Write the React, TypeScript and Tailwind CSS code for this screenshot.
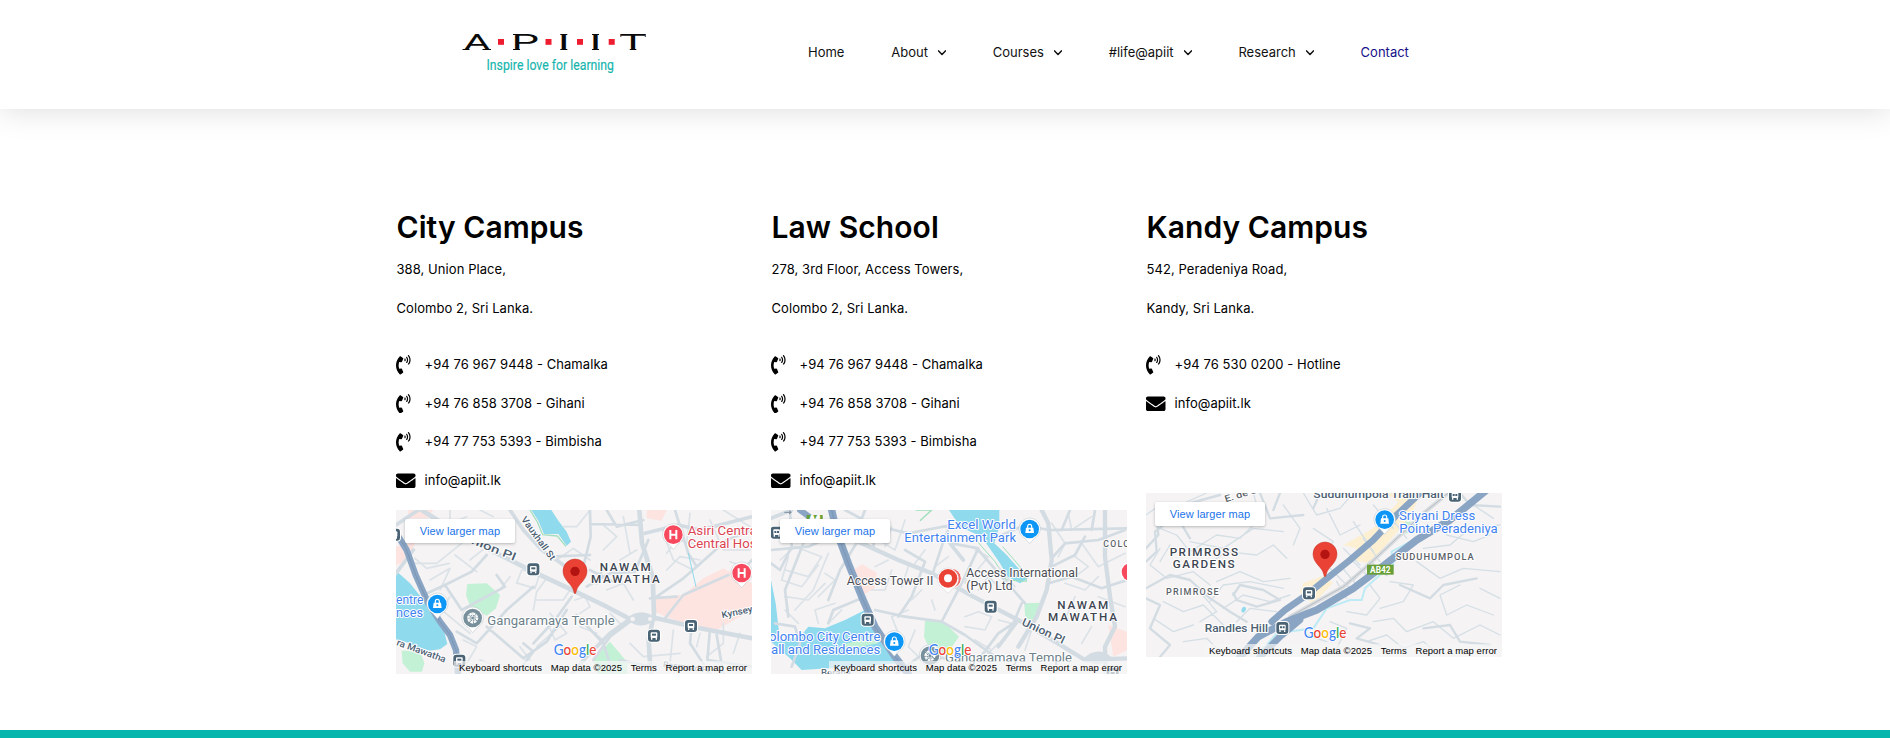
import type { ReactNode } from "react";
import { FaEnvelope, FaPhoneVolume } from "react-icons/fa";

const NAV = [
  { label: "Home", menu: false },
  { label: "About", menu: true },
  { label: "Courses", menu: true },
  { label: "#life@apiit", menu: true },
  { label: "Research", menu: true },
];

function Logo() {
  const letters: [string, number, number][] = [
    ["A", 1.5, 27],
    ["P", 49.4, 27.5],
    ["I", 95.8, 12],
    ["I", 127.5, 12],
    ["T", 157.8, 26.5],
  ];
  const serifs: [number, number, number][] = [
    [0.5, 19, 7],
    [20.5, 19, 8.5],
    [51, 19, 7],
    [51, 4, 4],
    [98.3, 4, 7],
    [98.3, 19, 7],
    [130, 4, 7],
    [130, 19, 7],
    [167.8, 19, 6.5],
  ];
  return (
    <svg width="184" height="44" viewBox="0 0 184 44" className="block overflow-visible">
      {letters.map(([c, x, w], i) => (
        <text
          key={i}
          x={x}
          y="20"
          textLength={w}
          lengthAdjust="spacingAndGlyphs"
          fontFamily="Roboto"
          fontSize="22.4"
          fill="#0a0a0a"
        >
          {c}
        </text>
      ))}
      {serifs.map(([x, y, w], i) => (
        <rect key={i} x={x} y={y} width={w} height="1" fill="#0a0a0a" />
      ))}
      <path d="M158.8 4V7M183.3 4V7" stroke="#0a0a0a" strokeWidth="0.8" />
      {[36, 83.5, 115, 146.7].map((x) => (
        <rect key={x} x={x} y="9" width="6" height="5.8" fill="#ed1c2e" />
      ))}
      <text
        x="24.5"
        y="40.3"
        textLength="127.5"
        lengthAdjust="spacingAndGlyphs"
        fontFamily="Roboto"
        fontSize="14"
        fill="#16b5ad"
        stroke="#16b5ad"
        strokeWidth="0.15"
      >
        Inspire love for learning
      </text>
    </svg>
  );
}

function Road({ d, w = 9, c = "#d3dce3" }: { d: string; w?: number; c?: string }) {
  return <path d={d} fill="none" stroke={c} strokeWidth={w} strokeLinejoin="round" strokeLinecap="round" />;
}

function Label({
  x,
  y,
  len,
  children,
  color = "#4b5563",
  size = 36,
  rotate = 0,
  weight = 500,
  gap,
}: {
  x: number;
  y: number;
  len: number;
  children: string;
  color?: string;
  size?: number;
  rotate?: number;
  weight?: number;
  gap?: boolean;
}) {
  return (
    <text
      x={x}
      y={y}
      textLength={len}
      lengthAdjust={gap ? "spacing" : "spacingAndGlyphs"}
      transform={rotate ? `rotate(${rotate} ${x} ${y})` : undefined}
      fontFamily="Roboto"
      fontSize={size}
      fontWeight={weight}
      fill={color}
      stroke="#ffffff"
      strokeWidth="6"
      strokeLinejoin="round"
      paintOrder="stroke"
    >
      {children}
    </text>
  );
}

function Station({ x, y, train }: { x: number; y: number; train?: boolean }) {
  return (
    <g transform={`translate(${x} ${y})`}>
      <rect x="-21" y="-21" width="42" height="42" rx="12" fill="#fff" />
      <rect x="-18" y="-18" width="36" height="36" rx="9" fill="#4a6375" />
      <rect x="-10" y="-10" width="20" height="17" rx="3" fill="#fff" />
      <path d="M-7 7v5M7 7v5" stroke="#fff" strokeWidth="4" />
      <path d={train ? "M-7 -5H-1V1H-7ZM1 -5H7V1H1Z" : "M-6 -6H6V0H-6Z"} fill="#4a6375" />
    </g>
  );
}

function Poi({ x, y, color, kind }: { x: number; y: number; color: string; kind: "bag" | "hospital" | "temple" }) {
  return (
    <g transform={`translate(${x} ${y})`}>
      <path d="M0 44L-14 28A32 32 0 1 1 14 28Z" fill="#fff" stroke="#b8c0c8" strokeWidth="1.5" />
      <circle r="28" fill={color} />
      {kind === "hospital" && <path d="M-9 -14V14M9 -14V14M-9 0H9" stroke="#fff" strokeWidth="6" />}
      {kind === "bag" && (
        <>
          <path d="M-11 -4H11L13 12H-13Z" fill="#fff" />
          <path d="M-6 -3V-8A6 6 0 0 1 6 -8V-3" fill="none" stroke="#fff" strokeWidth="3.5" />
          <circle cy="4" r="3" fill={color} />
        </>
      )}
      {kind === "temple" && (
        <>
          <circle r="13" fill="none" stroke="#fff" strokeWidth="7" strokeDasharray="6 4.2" />
          <path d="M-17 0H17M0 -17V17M-12 -12L12 12M-12 12L12 -12" stroke="#fff" strokeWidth="3" />
          <circle r="4" fill={color} />
        </>
      )}
    </g>
  );
}

function Pin({ x, y }: { x: number; y: number }) {
  return (
    <g transform={`translate(${x} ${y})`}>
      <path
        d="M0 0C-2 0 -3 -3 -4 -8C-8 -29 -36 -40 -36 -68A36 36 0 1 1 36 -68C36 -40 8 -29 4 -8C3 -3 2 0 0 0Z"
        fill="#ea4335"
        stroke="#c5372c"
        strokeWidth="1.5"
      />
      <circle cy="-67" r="14" fill="#b31412" />
    </g>
  );
}

function GoogleMark({ y }: { y: number }) {
  return (
    <text
      x="491"
      y={y}
      textLength="128"
      lengthAdjust="spacingAndGlyphs"
      fontFamily="Lato"
      fontSize="43"
      fontWeight="500"
      stroke="#fff"
      strokeWidth="5"
      paintOrder="stroke"
    >
      <tspan fill="#4285f4">G</tspan>
      <tspan fill="#ea4335">o</tspan>
      <tspan fill="#fbbc04">o</tspan>
      <tspan fill="#4285f4">g</tspan>
      <tspan fill="#34a853">l</tspan>
      <tspan fill="#ea4335">e</tspan>
    </text>
  );
}

function CityMap() {
  return (
    <>
      <path d="M18 212L60 250L100 300L160 385L172 432L150 448L95 455L60 430L18 418Z" fill="#90daee" />
      <path d="M424 30H484L505 62L530 95L543 125L530 137L505 102H462L445 62Z" fill="#90daee" />
      <path d="M420 30L442 66L458 104L502 108L528 139" fill="none" stroke="#a4dfc0" strokeWidth="4" />
      <path d="M232 252L290 250L330 285L318 325L290 347L240 318L228 285Z" fill="#c3f1d5" />
      <path d="M35 452L90 452L103 490L96 515H60L38 490Z" fill="#c3f1d5" />
      <path d="M608 480L660 425L712 487V522H625Z" fill="#c3f1d5" />
      <path d="M18 140L75 125L60 180L18 195Z" fill="#fde4e1" />
      <path d="M55 30H130L112 55H55Z" fill="#fde4e1" />
      <path d="M800 290L880 285L940 235L1000 205L1086 250V330L980 390L905 375L830 352L795 335Z" fill="#fde4e1" />
      <path d="M770 30H830L815 62L770 55Z" fill="#fde4e1" />
      <Road
        w={5}
        c="#dbe2e8"
        d="M60 190H140L215 130M75 175L110 205L178 190M120 240L180 205L150 270M195 165L260 215M240 180L290 140M380 250L395 210L450 220L435 265L385 250M470 235L440 275L430 330M330 270L360 230M440 300H520L540 270M520 370L440 440M480 340L530 400L495 420L480 385M555 300L585 290L600 320L570 340M600 180L550 145L500 180M640 75L680 110L640 150M700 50L720 160M690 180L740 150M650 270L700 250L730 300M820 100L850 180L910 210M830 210L870 170L930 180M960 60L1000 150L1080 150M900 40L890 130M1000 30L1080 80M600 30L560 80H520M230 490L260 440L220 420M270 480L330 500M390 440L420 480M570 380L620 400M700 380L660 340M850 390L840 490M930 400L920 440M950 470L1000 430V370M1050 400L1030 460M720 430L760 470L870 460M640 420L600 390M180 290L155 330L240 400M270 30L310 50M180 30V70L230 50M830 160L860 120L910 130M1020 185L1080 205"
      />
      <Road
        w={8}
        d="M100 285L165 255L245 215L290 165M165 255L215 330L345 260L320 225M200 395L260 430L350 330L430 260M290 380L400 475L470 425L530 330M380 520L430 455L400 430M545 290L495 360L430 430M600 30L602 110L575 220M650 30L680 80L760 60M600 72L755 75M480 170L600 165M590 260L660 220L735 215L775 120M800 290L880 235L920 200L895 160L855 30M920 200L1010 120L1086 90M780 295L860 290M825 355L880 285L1015 225M560 345L640 430L670 522M740 350L660 410L610 480M905 375L900 430L960 522M960 387L952 480L1086 500M620 250L640 200M670 245L600 210M1040 230L1086 180M690 480L780 500M980 405L1000 522"
      />
      <Road w={14} d="M95 30L150 65L225 110L330 165L440 220L530 262L640 315L720 357L800 355L930 385L1086 415" />
      <Road w={14} d="M748 30L756 130L788 230L792 340L776 420L782 522" />
      <Road w={11} d="M360 30L400 90L455 150L535 205M765 100L865 75L930 90L1086 50M720 357L660 400L590 470L545 522M18 75L85 30M18 220L70 150" />
      <path d="M708 356Q755 318 798 355Q755 398 708 356Z" fill="#d3dce3" />
      <circle cx="728" cy="357" r="7" fill="#f5f3f3" />
      <circle cx="780" cy="357" r="6" fill="#f5f3f3" />
      <Road w={3} c="#90daee" d="M895 160L918 260" />
      <Road w={19} c="#8aa5c4" d="M18 98L50 150L77 225L115 310L150 365L180 405L198 450L204 522" />
      <Road w={2} c="#728eae" d="M18 98L50 150L77 225L115 310L150 365L180 405L198 450L204 522" />
      <Station x={12} y={104} />
      <Label x={215} y={119} len={170} rotate={22} color="#4d6073" size={33}>
        Union Pl
      </Label>
      <Label x={392} y={58} len={155} rotate={54} color="#4d6073" size={28}>
        Vauxhall St
      </Label>
      <Label x={18} y={435} len={155} rotate={20} color="#4d6073" size={28}>
        ra Mawatha
      </Label>
      <Label x={997} y={355} len={94} rotate={-12} color="#4d6073" size={28}>
        Kynsey
      </Label>
      <Label x={629} y={214} len={153} color="#3c4450" size={35} gap>
        NAWAM
      </Label>
      <Label x={603} y={250} len={206} color="#3c4450" size={35} gap>
        MAWATHA
      </Label>
      <Label x={893} y={105} len={207} color="#db4453" size={38} weight={400}>
        Asiri Centra
      </Label>
      <Label x={893} y={143} len={207} color="#db4453" size={38} weight={400}>
        Central Hos
      </Label>
      <Label x={18} y={312} len={82} color="#3f82f0" size={38} weight={400}>
        entre
      </Label>
      <Label x={18} y={350} len={81} color="#3f82f0" size={38} weight={400}>
        nces
      </Label>
      <Label x={292} y={374} len={382} color="#6d7f8b" size={38} weight={400}>
        Gangaramaya Temple
      </Label>
      <Label x={818} y={501} len={140} color="#647789" size={25} rotate={7}>
        Rosmead Pl
      </Label>
      <Station x={430} y={208} />
      <Station x={903} y={378} />
      <Station x={792} y={407} />
      <Station x={208} y={482} />
      <Poi x={142} y={312} color="#0d96f6" kind="bag" />
      <Poi x={248} y={354} color="#78909c" kind="temple" />
      <Poi x={850} y={104} color="#f8485e" kind="hospital" />
      <Poi x={1055} y={219} color="#f8485e" kind="hospital" />
      <Pin x={555} y={281} />
      <GoogleMark y={464} />
    </>
  );
}

function LawMap() {
  return (
    <>
      <path d="M552 30H703V80L688 130L725 165L788 236L765 250L728 230L705 190L650 110L585 80Z" fill="#90daee" />
      <path d="M18 240L32 310L42 395L18 415Z" fill="#90daee" />
      <path d="M300 330L240 360L180 385L130 380L105 410L18 425L75 475L110 510L260 500L400 490L350 430Z" fill="#90daee" />
      <path d="M452 30L500 30L465 62" fill="none" stroke="#9ddfbb" strokeWidth="4" />
      <path d="M620 105L690 185L725 240L785 244L765 200L713 140" fill="none" stroke="#9ddfbb" strokeWidth="3" />
      <path d="M480 362L535 365L582 410L550 455L500 460L477 410Z" fill="#c3f1d5" />
      <path d="M778 310L835 308L820 350L795 366L780 345Z" fill="#c3f1d5" />
      <path d="M225 435L330 410L340 430L260 445Z" fill="#c3f1d5" />
      <path d="M265 210L292 193L335 218L330 265L285 290Z" fill="#fde4e1" />
      <path d="M1030 375L1086 395V450L1045 470Z" fill="#fde4e1" />
      <Road
        w={5}
        c="#dbe2e8"
        d="M45 180L90 140L170 170L130 230L60 210M70 170L50 240L110 260L160 195M190 160L145 270L90 330M180 220L210 240L160 290M60 290L130 300L180 250M100 370L60 330M160 370L150 330L210 310M230 330L190 370M280 70L240 95M330 60L310 100L370 130M380 80L360 140M420 60L390 150L340 120M330 200L370 180M380 210L360 270H320M430 200L410 260M480 150L450 190M550 170L510 200M620 190L600 250M630 150L670 170L620 230M700 260L670 230L640 270M700 200L750 260M600 350L640 335L680 350L660 390L600 380M700 360L740 370L720 420M630 420L680 450M800 390L780 450M860 70L900 130L880 170M910 40L920 90L980 50M930 170L970 200L930 230M950 130L1000 200L1080 160M900 250L960 270L1000 230M1000 290L1080 320M930 290L900 360M430 330L380 350L400 400M450 390L430 440L460 470M440 300L470 270M510 330L500 300M700 430L650 480M980 380L950 430"
      />
      <Road
        w={8}
        d="M18 190L45 210L80 140L75 30M115 130L60 270L70 350M18 150L130 140L220 100M190 300L225 210L280 120M270 110L300 30M330 75L325 145M240 30L325 75L430 100L560 75M555 75L535 125L500 230M420 150L480 185L440 290L400 350M330 330L420 350L530 365L600 405L690 470M530 365L590 250L640 145L560 130M640 150L780 310M770 310L745 370L700 400L640 480M700 110L780 75L850 90L1086 85M860 175L900 130L1000 120L1080 90M915 30L890 90M990 30L980 90M860 200L930 165L960 110M850 250L920 230L1010 265L1086 240M80 500L105 430L90 380L30 370M190 370L205 330L300 290M395 520L470 465L540 475"
      />
      <Road w={13} d="M195 85L280 125L400 180L500 220L625 290L760 360L870 425L960 480L1086 475" />
      <Road w={13} d="M830 30L850 70L860 180L845 270L815 350L760 440M1020 30V170L1035 290L1050 380L1020 440L1022 522" />
      <path d="M955 475Q1000 435 1040 472Q1000 512 955 475Z" fill="#d3dce3" />
      <Road w={11} d="M18 92L140 75L195 85M555 130L595 180M18 55L80 30M760 360L700 440" />
      <Road w={22} c="#8aa5c4" d="M200 30L215 95L250 190L290 290L330 380L390 470L430 522" />
      <Road w={2} c="#728eae" d="M200 30L215 95L250 190L290 290L330 380L390 470L430 522" />
      <Road w={18} c="#8aa5c4" d="M105 30L160 70" />
      <rect x="125" y="45" width="48" height="30" fill="#689f38" />
      <Label x={133} y={70} len={32} color="#fff" size={26}>
        A4
      </Label>
      <path d="M58 37H78M72 32L79 37L72 42" stroke="#7b8a98" strokeWidth="3" fill="none" />
      <Station x={35} y={98} train />
      <Label x={547} y={87} len={206} color="#3f82f0" size={38} weight={400}>
        Excel World
      </Label>
      <Label x={418} y={126} len={335} color="#3f82f0" size={38} weight={400}>
        Entertainment Park
      </Label>
      <Label x={245} y={254} len={260} color="#4b4d55" size={38} weight={400}>
        Access Tower II
      </Label>
      <Label x={604} y={232} len={335} color="#4b4d55" size={38} weight={400}>
        Access International
      </Label>
      <Label x={604} y={271} len={139} color="#4b4d55" size={38} weight={400}>
        (Pvt) Ltd
      </Label>
      <Label x={877} y={327} len={153} color="#3c4450" size={35} gap>
        NAWAM
      </Label>
      <Label x={849} y={363} len={207} color="#3c4450" size={35} gap>
        MAWATHA
      </Label>
      <Label x={1015} y={140} len={78} color="#5b6168" size={26} gap>
        COLO
      </Label>
      <Label x={768} y={374} len={138} rotate={25} color="#4d6073" size={33}>
        Union Pl
      </Label>
      <Label x={12} y={424} len={334} color="#3f82f0" size={38} weight={400}>
        olombo City Centre
      </Label>
      <Label x={18} y={463} len={328} color="#3f82f0" size={38} weight={400}>
        all and Residences
      </Label>
      <Label x={168} y={528} len={90} color="#5b6e80" size={28}>
        Beraha
      </Label>
      <Label x={540} y={485} len={381} color="#6d7f8b" size={38} weight={400}>
        Gangaramaya Temple
      </Label>
      <Station x={308} y={359} />
      <Station x={677} y={320} />
      <Station x={1043} y={522} />
      <Poi x={794} y={87} color="#0d96f6" kind="bag" />
      <Poi x={388} y={425} color="#0d96f6" kind="bag" />
      <Poi x={495} y={467} color="#78909c" kind="temple" />
      <circle cx="1096" cy="216" r="30" fill="#fff" />
      <circle cx="1096" cy="216" r="26" fill="#f8485e" />
      <circle cx="559" cy="235" r="30" fill="#f26965" stroke="#fff" strokeWidth="3" />
      <path d="M549 280L533 264A32 32 0 1 1 565 264Z" fill="#fff" stroke="#b8c0c8" strokeWidth="1" />
      <circle cx="549" cy="235" r="28" fill="#ea4335" />
      <circle cx="549" cy="235" r="12" fill="#fff" />
      <GoogleMark y={464} />
    </>
  );
}

function KandyMap() {
  return (
    <>
      <path d="M735 24H840L815 90L690 235L635 225L650 190L610 180L700 130L775 50Z" fill="#fcefd2" />
      <path d="M490 295L555 270L578 295L540 335L515 355L480 320Z" fill="#fcefd2" />
      <path d="M795 110H830L820 145H790Z" fill="#c3f1d5" />
      <Road
        w={4}
        c="#d5dfe6"
        d="M60 130L110 150L150 200L230 150L300 160L370 90M120 60L200 24M150 170L250 190L340 130L430 140M60 190L30 240L80 280L160 260L210 300M200 240L260 200L350 210L400 180L440 220M230 290L300 260L370 290L450 280M210 350L250 300L330 290L430 310M250 370L310 330L390 350L450 330M70 350L130 380L190 360L250 420M40 400L100 440L160 420M130 470L200 460L240 500M290 410L330 370L410 380M490 24L530 90L600 70L640 24M560 70L600 150L660 120M520 130L580 170L540 220M430 60L480 130L460 180M590 290L620 340M640 110L700 200M700 60L760 130M740 80L800 160M670 160L720 230M610 190L660 240M570 250L640 320M600 240L650 300M630 220L690 280M850 190L930 180L990 130L1080 120M830 230L900 280L970 250L1080 260M750 290L820 300L790 350L720 370M690 300L720 340L680 390L620 380M960 300L900 330L920 390L980 360L1060 390M1020 310L1080 340M700 410L760 400L800 440L880 410L940 460L1020 420L1080 450M680 470L740 450L790 490L850 470L900 510M570 410L620 430L590 490M500 450L560 470M1000 60L1060 100M920 150L1000 170L1050 150M60 230L90 180M18 90L60 60L90 100M300 100L350 60L340 24M180 320L230 380L180 410"
      />
      <Road
        w={7}
        d="M18 190L55 150L50 90L130 60L240 30M150 160L120 110L190 80M18 340L60 360L30 430L90 480L60 516M280 330L300 300L370 315L420 345L350 365L290 345L280 325M18 310L90 270L150 285L210 340L270 380L320 410M360 24L390 100L490 90M400 75L420 24M540 24L520 70M630 415L690 430L650 460L720 480M740 270L690 230L640 285M780 300L870 340L910 300L1010 280M960 24L990 60L1080 65M850 430L930 420L960 470L1050 480M18 230L50 200L45 140L150 60"
      />
      <Road w={6} c="#bdebf5" d="M350 516L410 445L520 430L560 370L630 345H665L675 310L720 270L760 240L755 200L830 160" />
      <ellipse cx="311" cy="374" rx="6" ry="9" fill="#90daee" transform="rotate(25 311 374)" />
      <Road w={12} c="#d9dde1" d="M450 395L610 305L680 245L850 85L925 24" />
      <Road w={3} c="#b8bdc2" d="M450 395L610 305L680 245L850 85L925 24" />
      <Road w={20} c="#8aa5c4" d="M395 410L435 375L500 330L555 285L630 225L700 165L770 90L850 15" />
      <Road w={22} c="#8aa5c4" d="M300 516L355 455L440 410L530 375L640 310L720 250L830 165L930 105L1040 15" />
      <Road w={20} c="#8aa5c4" d="M360 516L420 455L480 405" />
      <Label x={257} y={52} len={100} rotate={-17} color="#5b6168" size={28}>
        E. de S
      </Label>
      <Label x={520} y={39} len={392} color="#4d6073" size={34}>
        Suduhumpola Train Halt
      </Label>
      <Label x={89} y={214} len={205} color="#3c4450" size={35} gap>
        PRIMROSS
      </Label>
      <Label x={98} y={250} len={186} color="#3c4450" size={35} gap>
        GARDENS
      </Label>
      <Label x={78} y={329} len={158} color="#5b6168" size={27} gap>
        PRIMROSE
      </Label>
      <Label x={767} y={226} len={234} color="#5b6168" size={28} gap>
        SUDUHUMPOLA
      </Label>
      <Label x={777} y={104} len={229} color="#3f82f0" size={38} weight={400}>
        Sriyani Dress
      </Label>
      <Label x={778} y={143} len={295} color="#3f82f0" size={38} weight={400}>
        Point Peradeniya
      </Label>
      <Label x={194} y={440} len={190} color="#4d6073" size={35}>
        Randles Hill
      </Label>
      <rect x="681" y="239" width="80" height="30" fill="#689f38" />
      <text x="690" y="263" textLength="62" fontFamily="Roboto" fontSize="25" fontWeight="700" fill="#fff">
        AB42
      </text>
      <Station x={507} y={325} />
      <Station x={427} y={429} train />
      <Station x={945} y={32} train />
      <Poi x={734} y={104} color="#0d96f6" kind="bag" />
      <Pin x={555} y={275} />
      <GoogleMark y={458} />
    </>
  );
}

function MapFrame({ top, children }: { top: number; children: ReactNode }) {
  return (
    <div className="relative h-[164px] w-[356px] overflow-hidden bg-[#f5f3f3] font-['Liberation_Sans',sans-serif]">
      <svg width="356" height="164" viewBox={`18 ${top} 1068 492`} className="block">
        {children}
      </svg>
      <a className="absolute left-[9px] top-[9px] flex h-6 w-[110px] items-center justify-center whitespace-nowrap rounded-[2px] bg-white pt-px text-[11px] text-[#1a73e8] shadow-[0_1px_3px_rgba(0,0,0,0.25)]">
        View larger map
      </a>
      <div className="absolute bottom-0 right-0 flex h-[13px] w-[298px] items-center justify-between whitespace-nowrap bg-[#f5f5f5]/70 pl-[5px] pr-[5px] text-[9.5px] leading-[13px] text-black">
        <span>Keyboard shortcuts</span>
        <span>Map data ©2025</span>
        <span>Terms</span>
        <span>Report a map error</span>
      </div>
    </div>
  );
}

const CAMPUSES = [
  {
    name: "City Campus",
    address: ["388, Union Place,", "Colombo 2, Sri Lanka."],
    phones: ["+94 76 967 9448 - Chamalka", "+94 76 858 3708 - Gihani", "+94 77 753 5393 - Bimbisha"],
    map: (
      <MapFrame top={30}>
        <CityMap />
      </MapFrame>
    ),
    mapGap: "mt-[10.4px]",
  },
  {
    name: "Law School",
    address: ["278, 3rd Floor, Access Towers,", "Colombo 2, Sri Lanka."],
    phones: ["+94 76 967 9448 - Chamalka", "+94 76 858 3708 - Gihani", "+94 77 753 5393 - Bimbisha"],
    map: (
      <MapFrame top={30}>
        <LawMap />
      </MapFrame>
    ),
    mapGap: "mt-[10.4px]",
  },
  {
    name: "Kandy Campus",
    address: ["542, Peradeniya Road,", "Kandy, Sri Lanka."],
    phones: ["+94 76 530 0200 - Hotline"],
    map: (
      <MapFrame top={24}>
        <KandyMap />
      </MapFrame>
    ),
    mapGap: "mt-[70.2px]",
  },
];

export default function App() {
  return (
    <div className="flex h-[738px] flex-col overflow-hidden bg-white font-['Inter',sans-serif] text-[13px] text-black">
      <header className="flex h-[109px] shrink-0 items-start pl-[462px] shadow-[0_0_30px_rgba(0,0,0,0.15)]">
        <div className="w-[346px] pt-[30px]">
          <Logo />
        </div>
        <nav className="flex h-[106px] items-center gap-[46.8px] text-[#111]">
          {NAV.map((item) => (
            <a key={item.label} className="flex items-center gap-[10px] whitespace-nowrap">
              {item.label}
              {item.menu && (
                <svg width="8" height="6" viewBox="0 0 8 6" fill="none" stroke="#111" strokeWidth="1.5">
                  <path d="M0.6 0.9L4 4.4L7.4 0.9" strokeLinecap="round" strokeLinejoin="round" />
                </svg>
              )}
            </a>
          ))}
          <a className="text-[#15108a]">Contact</a>
        </nav>
      </header>

      <main className="flex flex-1 items-start gap-[19px] pl-[396px] pt-[100px] tracking-[0.07px]">
        {CAMPUSES.map((c) => (
          <section key={c.name} className="w-[356px]">
            <h2 className="pl-[0.5px] text-[30px] font-semibold leading-[36px]">{c.name}</h2>
            <div className="pl-[0.5px] pt-[5px]">
              {c.address.map((line) => (
                <p key={line} className="h-[39px] whitespace-nowrap leading-[38px]">
                  {line}
                </p>
              ))}
            </div>
            <ul className="pt-[18px]">
              {c.phones.map((p) => (
                <li key={p} className="flex h-[38.4px] items-center whitespace-nowrap">
                  <span className="w-[28.5px]">
                    <FaPhoneVolume className="h-[19.5px] w-[14.6px]" />
                  </span>
                  {p}
                </li>
              ))}
              <li className="flex h-[38.4px] items-center whitespace-nowrap">
                <span className="w-[28.5px]">
                  <FaEnvelope className="size-[19.5px]" />
                </span>
                info@apiit.lk
              </li>
            </ul>
            <div className={c.mapGap}>{c.map}</div>
          </section>
        ))}
      </main>

      <footer className="h-2 shrink-0 bg-[#06b5ab]" />
    </div>
  );
}
